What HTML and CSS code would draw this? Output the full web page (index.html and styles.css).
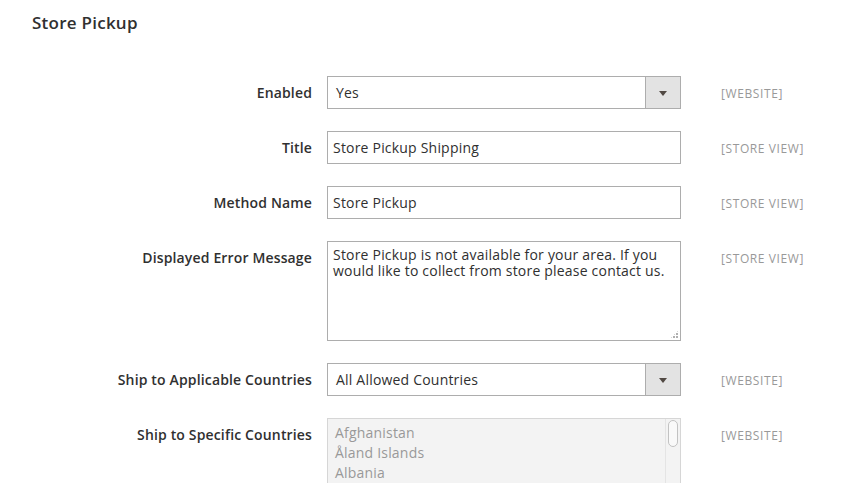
FILE: index.html
```html
<!DOCTYPE html>
<html>
<head>
<meta charset="utf-8">
<link rel="stylesheet" href="styles.css">
</head>
<body>
<div class="page">
  <h2 class="section-title">Store Pickup</h2>
  <div class="form">
    <div class="row">
      <div class="label">Enabled</div>
      <div class="control">
        <div class="select"><span class="select-value">Yes</span><span class="select-btn"><span class="arrow"></span></span></div>
      </div>
      <div class="scope">[WEBSITE]</div>
    </div>
    <div class="row">
      <div class="label">Title</div>
      <div class="control"><div class="input">Store Pickup Shipping</div></div>
      <div class="scope">[STORE VIEW]</div>
    </div>
    <div class="row">
      <div class="label">Method Name</div>
      <div class="control"><div class="input">Store Pickup</div></div>
      <div class="scope">[STORE VIEW]</div>
    </div>
    <div class="row">
      <div class="label">Displayed Error Message</div>
      <div class="control textarea-wrap">
        <textarea class="textarea">Store Pickup is not available for your area. If you would like to collect from store please contact us.</textarea>
        <span class="grip"></span>
      </div>
      <div class="scope">[STORE VIEW]</div>
    </div>
    <div class="row">
      <div class="label">Ship to Applicable Countries</div>
      <div class="control">
        <div class="select"><span class="select-value">All Allowed Countries</span><span class="select-btn"><span class="arrow"></span></span></div>
      </div>
      <div class="scope">[WEBSITE]</div>
    </div>
    <div class="row">
      <div class="label">Ship to Specific Countries</div>
      <div class="control">
        <div class="multiselect">
          <div class="options">
            <div class="opt">Afghanistan</div>
            <div class="opt">Åland Islands</div>
            <div class="opt">Albania</div>
          </div>
          <div class="scrollbar"><div class="thumb"></div></div>
        </div>
      </div>
      <div class="scope">[WEBSITE]</div>
    </div>
  </div>
</div>
</body>
</html>
```

FILE: styles.css
```css
html, body {
  margin: 0;
  padding: 0;
  background: #fff;
  overflow: hidden;
}
body {
  font-family: "Open Sans", "Noto Sans", sans-serif;
  color: #303030;
  width: 846px;
  height: 483px;
}
.page {
  padding: 11px 0 0 32px;
}
.section-title {
  margin: 0;
  font-size: 17px;
  font-weight: 600;
  line-height: 24px;
  letter-spacing: 0.25px;
  color: #303030;
}
.form {
  margin-top: 41px;
  margin-left: -32px;
  display: flex;
  flex-direction: column;
  gap: 22px;
}
.row {
  display: grid;
  grid-template-columns: 312px 354px auto;
  column-gap: 15px;
  align-items: start;
}
.label {
  text-align: right;
  font-size: 14px;
  font-weight: 600;
  line-height: 19px;
  padding-top: 7px;
  letter-spacing: 0.15px;
  color: #303030;
}
.scope {
  margin-left: 25px;
  font-size: 12px;
  line-height: 19px;
  padding-top: 8px;
  color: #999;
  letter-spacing: 0.6px;
}
.control {
  width: 354px;
}
.select {
  display: flex;
  height: 33px;
  box-sizing: border-box;
  border: 1px solid #adadad;
  background: #fff;
}
.select-value {
  flex: 1;
  font-size: 14px;
  line-height: 31px;
  padding-left: 8px;
  letter-spacing: 0.2px;
  color: #303030;
}
.select-btn {
  width: 34px;
  border-left: 1px solid #adadad;
  background: #e3e3e3;
  display: flex;
  align-items: center;
  justify-content: center;
}
.arrow {
  width: 0;
  height: 0;
  border-left: 4px solid transparent;
  border-right: 4px solid transparent;
  border-top: 5px solid #514943;
  margin-top: 1px;
}
.input {
  height: 33px;
  box-sizing: border-box;
  border: 1px solid #adadad;
  font-size: 14px;
  line-height: 31px;
  padding-left: 5px;
  letter-spacing: 0.2px;
  color: #303030;
}
.textarea-wrap {
  position: relative;
}
.textarea {
  display: block;
  width: 354px;
  height: 100px;
  box-sizing: border-box;
  border: 1px solid #adadad;
  border-radius: 0;
  margin: 0;
  padding: 5px 10px 0 5px;
  font-family: "Open Sans", "Noto Sans", sans-serif;
  font-size: 14px;
  line-height: 16px;
  letter-spacing: 0.2px;
  color: #303030;
  resize: none;
  outline: none;
  overflow: hidden;
}
.grip {
  position: absolute;
  right: 2px;
  bottom: 2px;
  width: 9px;
  height: 9px;
  background-image: radial-gradient(circle at 1px 1px, #b0b0b0 0.9px, transparent 1px);
  background-size: 3px 3px;
  clip-path: polygon(100% 0, 100% 100%, 0 100%);
}
.multiselect {
  display: flex;
  height: 120px;
  box-sizing: border-box;
  border: 1px solid #d6d6d6;
  background: #f3f3f3;
}
.options {
  flex: 1;
  padding: 4px 0 0 7px;
}
.opt {
  font-size: 14px;
  line-height: 20px;
  letter-spacing: 0.2px;
  color: #999;
}
.scrollbar {
  width: 15px;
  background: #f3f3f3;
  box-sizing: border-box;
  border-left: 1px solid #e4e4e4;
  padding: 1px 2px;
}
.thumb {
  height: 27px;
  box-sizing: border-box;
  border: 1px solid #c2c2c2;
  border-radius: 5px;
  background: #f9f9f9;
}
```
